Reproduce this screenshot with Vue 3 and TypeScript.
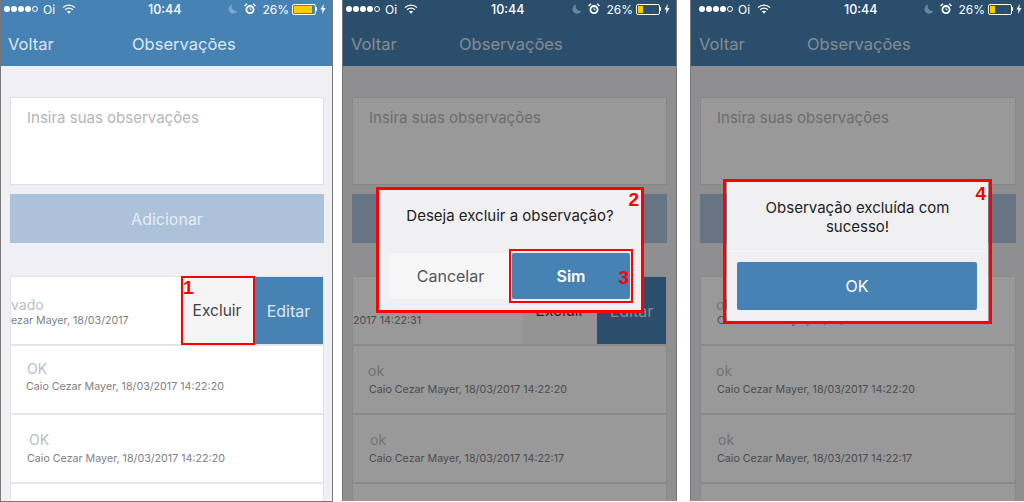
<template>
  <div class="shots">
    <section v-for="phone in phones" :key="phone.id" class="phone" :class="phone.id">
      <header class="top">
        <div class="status">
          <div class="status-left">
            <span class="signal">
              <i v-for="n in 4" :key="n" class="dot"></i>
              <i class="dot empty"></i>
            </span>
            <span class="carrier">Oi</span>
            <svg class="wifi" viewBox="0 0 14 10">
              <path d="M1 3.6a8.4 8.4 0 0 1 12 0" fill="none" stroke="currentColor" stroke-width="1.3"/>
              <path d="M3.2 5.7a5.2 5.2 0 0 1 7.6 0" fill="none" stroke="currentColor" stroke-width="1.3"/>
              <path d="M5 7.6a2.6 2.6 0 0 1 4 0L7 9.8z" fill="currentColor"/>
            </svg>
          </div>
          <span class="clock">10:44</span>
          <div class="status-right">
            <svg class="moon" viewBox="0 0 10 10">
              <path d="M4 .6a4.6 4.6 0 1 0 5.4 6.2A4.6 4.6 0 0 1 4 .6z" fill="currentColor"/>
            </svg>
            <svg class="alarm" viewBox="0 0 12 12">
              <circle cx="6" cy="6.6" r="3.6" fill="none" stroke="currentColor" stroke-width="1.8"/>
              <path d="M6 4.6v2.2h1.6" fill="none" stroke="currentColor" stroke-width=".8"/>
              <path d="M.6 3 3 .8M11.4 3 9 .8" stroke="currentColor" stroke-width="1.5"/>
            </svg>
            <span class="percent">26%</span>
            <span class="battery"><i class="charge" :style="{ width: phone.charge + '%' }"></i></span>
            <span class="nub"></span>
            <svg class="bolt" viewBox="0 0 6 10">
              <path d="M3.8 0 .4 5.6h2.1L2 10l3.6-6H3.3z" fill="currentColor"/>
            </svg>
          </div>
        </div>
        <nav class="navbar">
          <span class="back">Voltar</span>
          <span class="title">Observações</span>
        </nav>
      </header>

      <main class="content">
        <div class="input-box">Insira suas observações</div>
        <button class="add-btn">{{ phone.dim ? '' : 'Adicionar' }}</button>

        <ul class="notes">
          <li class="note swiped">
            <div class="note-body">
              <p class="note-text">{{ phone.first.text }}</p>
              <p class="note-meta">{{ phone.first.meta }}</p>
            </div>
            <template v-if="phone.actions">
              <span class="act del">Excluir</span>
              <span class="act edit">Editar</span>
            </template>
          </li>
          <li v-for="(row, i) in phone.rows" :key="i" class="note">
            <div class="note-body">
              <p class="note-text">{{ row.text }}</p>
              <p class="note-meta">{{ row.meta }}</p>
            </div>
          </li>
          <li class="note"></li>
        </ul>
      </main>

      <div v-if="phone.dim" class="scrim"></div>

      <div v-if="phone.id === 'two'" class="dialog confirm">
        <p class="dialog-msg">Deseja excluir a observação?</p>
        <div class="dialog-btns">
          <span class="cancel">Cancelar</span>
          <span class="primary">Sim</span>
        </div>
      </div>
      <div v-if="phone.id === 'three'" class="dialog done">
        <p class="dialog-msg">Observação excluída com<br>sucesso!</p>
        <div class="dialog-btns">
          <span class="primary">OK</span>
        </div>
      </div>

      <div
        v-for="mark in phone.marks"
        :key="mark.n"
        class="mark"
        :class="'mark-' + mark.n"
      ><b>{{ mark.n }}</b></div>
    </section>
  </div>
</template>

<script setup lang="ts">
interface Row {
  text: string
  meta: string
}

interface Phone {
  id: string
  dim: boolean
  charge: number
  actions: boolean
  first: Row
  rows: Row[]
  marks: { n: number }[]
}

const phones: Phone[] = [
  {
    id: 'one',
    dim: false,
    charge: 88,
    actions: true,
    first: { text: 'vado', meta: 'ezar Mayer, 18/03/2017' },
    rows: [
      { text: 'OK', meta: 'Caio Cezar Mayer, 18/03/2017 14:22:20' },
      { text: 'OK', meta: 'Caio Cezar Mayer, 18/03/2017 14:22:20' },
    ],
    marks: [{ n: 1 }],
  },
  {
    id: 'two',
    dim: true,
    charge: 26,
    actions: true,
    first: { text: '', meta: '2017 14:22:31' },
    rows: [
      { text: 'ok', meta: 'Caio Cezar Mayer, 18/03/2017 14:22:20' },
      { text: 'ok', meta: 'Caio Cezar Mayer, 18/03/2017 14:22:17' },
    ],
    marks: [{ n: 2 }, { n: 3 }],
  },
  {
    id: 'three',
    dim: true,
    charge: 26,
    actions: false,
    first: { text: 'ok', meta: 'Caio Cezar Mayer, 18/03/2017 14:22:27' },
    rows: [
      { text: 'ok', meta: 'Caio Cezar Mayer, 18/03/2017 14:22:20' },
      { text: 'ok', meta: 'Caio Cezar Mayer, 18/03/2017 14:22:17' },
    ],
    marks: [{ n: 4 }],
  },
]
</script>

<style>
html,
body {
  margin: 0;
  background: #fff;
}
</style>

<style scoped>
.shots {
  display: flex;
  width: 1024px;
  height: 502px;
  overflow: hidden;
  font-family: Inter, "Liberation Sans", sans-serif;
}

.phone {
  position: relative;
  display: flex;
  flex-direction: column;
  box-sizing: border-box;
  flex: none;
  height: 501px;
  overflow: hidden;
  background: #efeff4;
  border-left: 1px solid #77777a;
  border-right: 1px solid #77777a;
}

.one {
  width: 333px;
  height: 502px;
  border-bottom: 1px solid #77777a;
}

.two {
  width: 335px;
  margin-left: 9px;
}

.three {
  width: 334px;
  margin-left: 13px;
  border-right: none;
}

.top {
  flex: none;
  height: 66px;
  background: #4682b4;
  color: #fff;
}

.status {
  display: flex;
  align-items: center;
  justify-content: space-between;
  position: relative;
  z-index: 2;
  height: 18px;
  padding: 0 6px 0 3px;
}

.three .status {
  padding: 0 2px 0 8px;
}

.status-left,
.status-right {
  display: flex;
  align-items: center;
}

.signal {
  display: flex;
  gap: 1px;
}

.dot {
  width: 6px;
  height: 6px;
  border-radius: 50%;
  background: #fff;
}

.dot.empty {
  box-sizing: border-box;
  background: none;
  border: 1px solid #fff;
}

.carrier {
  margin-left: 5px;
  font-size: 12px;
}

.wifi {
  width: 14px;
  height: 10px;
  margin-left: 7px;
}

.clock {
  position: absolute;
  left: 147px;
  top: 2px;
  font-size: 12.5px;
  font-weight: 500;
}

.two .clock {
  left: 148px;
}

.three .clock {
  left: 153px;
}

.moon {
  width: 10px;
  height: 10px;
  color: #7ea6ce;
}

.two .moon,
.three .moon {
  color: #6a87a3;
}

.alarm {
  width: 12px;
  height: 12px;
  margin-left: 6px;
}

.percent {
  margin-left: 6px;
  font-size: 12px;
}

.battery {
  display: block;
  box-sizing: border-box;
  width: 24px;
  height: 11px;
  margin-left: 3px;
  padding: 1px;
  border: 1px solid #fff;
  border-radius: 2px;
}

.charge {
  display: block;
  height: 100%;
  background: #ffcc00;
}

.nub {
  width: 1px;
  height: 4px;
  background: #fff;
}

.bolt {
  width: 6px;
  height: 10px;
  margin-left: 3px;
}

.navbar {
  position: relative;
  display: flex;
  align-items: center;
  height: 48px;
  padding: 3px 0 0 7px;
  box-sizing: border-box;
  font-size: 16.5px;
  color: #dce8f2;
}

.two .navbar,
.three .navbar {
  padding-left: 8px;
}

.title {
  position: absolute;
  left: 131px;
}

.two .title,
.three .title {
  left: 116px;
}

.content {
  flex: 1;
  display: flex;
  flex-direction: column;
  min-height: 0;
  padding: 31px 8px 0 9px;
}

.two .content {
  padding-right: 9px;
}

.input-box {
  box-sizing: border-box;
  flex: none;
  height: 88px;
  padding: 10px 16px;
  background: #fff;
  border: 1px solid #e0e0e2;
  font-size: 15px;
  color: #b5b5b8;
}

.add-btn {
  flex: none;
  height: 49px;
  margin-top: 9px;
  border: none;
  background: #abc2da;
  color: #e6edf4;
  font: inherit;
  font-size: 16px;
}

.notes {
  flex: none;
  margin: 33px 0 0;
  padding: 0;
  list-style: none;
  background: #fff;
  border: 1px solid #e4e4e6;
  border-bottom: none;
}

.note {
  display: flex;
  box-sizing: border-box;
  height: 69px;
  border-bottom: 2px solid #e4e4e6;
  background: #fff;
}

.note-body {
  flex: 1;
  min-width: 0;
  padding: 16px 0 0 16px;
  overflow: hidden;
}

.note-text {
  min-height: 18px;
  margin: 0;
  font-size: 14px;
  line-height: 18px;
  color: #bdbdbf;
}

.note-meta {
  margin: 3px 0 0;
  font-size: 10.7px;
  line-height: 14px;
  white-space: nowrap;
  color: #808084;
}

.two .note-text,
.three .note-text {
  margin-left: -1px;
}

.note:nth-child(3) .note-text {
  padding-left: 2px;
}

.one .note:nth-child(2) .note-body {
  padding-top: 14px;
}

.one .note:nth-child(2) .note-meta {
  margin-top: 2px;
  margin-left: -1px;
}

.swiped .note-text {
  margin-top: 3px;
}

.swiped .note-meta {
  margin-top: 0;
}

.one .swiped .note-body,
.two .swiped .note-body {
  padding-left: 0;
}

.act {
  display: flex;
  flex: none;
  align-items: center;
  justify-content: center;
  font-size: 15.5px;
}

.del {
  width: 74px;
  background: #f5f5f5;
  color: #444;
}

.edit {
  width: 69px;
  background: #4682b4;
  color: #dce8f2;
  font-size: 16px;
}

.scrim {
  position: absolute;
  inset: 0;
  background: rgba(0, 0, 0, 0.4);
}

.dialog {
  position: absolute;
  display: flex;
  flex-direction: column;
  box-sizing: border-box;
  background: #f0f0f2;
}

.confirm {
  left: 35px;
  top: 190px;
  width: 264px;
  height: 120px;
}

.done {
  left: 36px;
  top: 182px;
  width: 261px;
  height: 139px;
}

.dialog-msg {
  margin: 0;
  text-align: center;
  font-size: 15px;
  line-height: 19px;
  color: #222;
}

.confirm .dialog-msg {
  padding-top: 16px;
  height: 63px;
  box-sizing: border-box;
}

.done .dialog-msg {
  box-sizing: border-box;
  height: 70px;
  padding-top: 16px;
  border-bottom: 1px solid #f6f6f7;
}

.dialog-btns {
  display: flex;
}

.confirm .dialog-btns {
  height: 46px;
  padding: 0 12px 0 11px;
}

.done .dialog-btns {
  height: 48px;
  margin-top: 10px;
  padding: 0 11px 0 10px;
}

.cancel {
  display: flex;
  flex: none;
  align-items: center;
  justify-content: center;
  width: 123px;
  background: #f6f6f7;
  color: #555;
  font-size: 16px;
}

.primary {
  display: flex;
  flex: 1;
  align-items: center;
  justify-content: center;
  background: #4682b4;
  border-radius: 2px;
  color: #fff;
  font-size: 16px;
}

.confirm .primary {
  font-weight: 600;
}

.mark {
  position: absolute;
  box-sizing: border-box;
  border: 2px solid #f00;
}

.mark-2,
.mark-4 {
  border-width: 3px;
}

.mark b {
  position: absolute;
  color: #f00;
  font: bold 19px/18px "Liberation Sans", sans-serif;
}

.mark-1 {
  left: 180px;
  top: 276px;
  width: 74px;
  height: 69px;
}

.mark-1 b {
  left: 0;
  top: 1px;
}

.mark-2 {
  left: 33px;
  top: 187px;
  width: 268px;
  height: 126px;
}

.mark-2 b {
  right: 2px;
  top: 1px;
}

.mark-3 {
  left: 166px;
  top: 249px;
  width: 124px;
  height: 54px;
}

.mark-3 b {
  right: 2px;
  top: 18px;
}

.mark-4 {
  left: 32px;
  top: 179px;
  width: 269px;
  height: 145px;
}

.mark-4 b {
  right: 3px;
  top: 3px;
}
</style>
